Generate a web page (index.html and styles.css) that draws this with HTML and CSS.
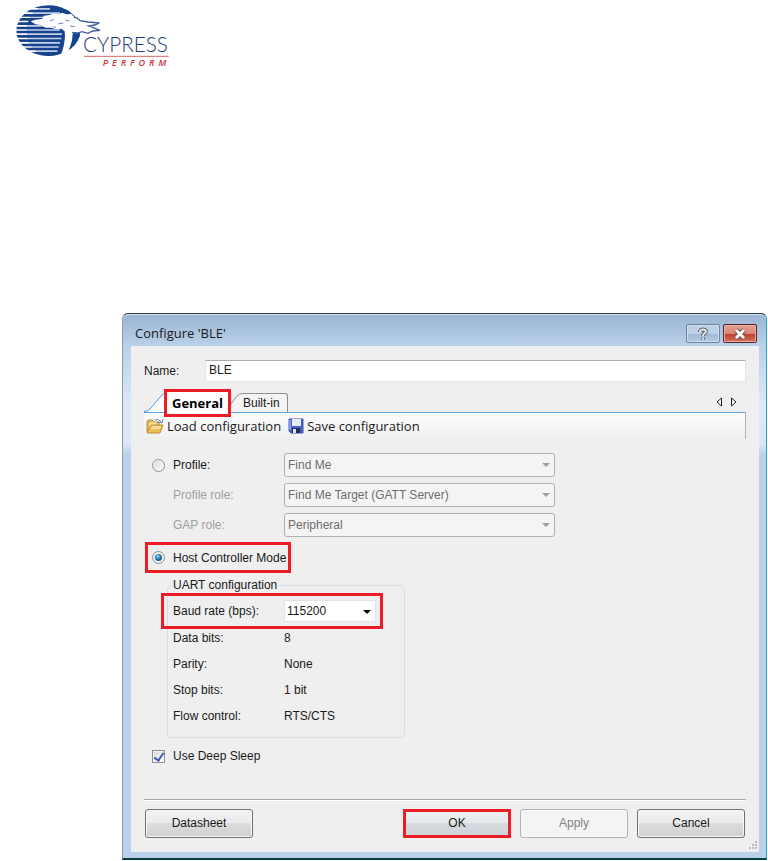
FILE: index.html
```html
<!DOCTYPE html>
<html lang="en">
<head>
<meta charset="UTF-8">
<meta name="viewport" content="width=device-width, initial-scale=1.0">
<title>Configure 'BLE'</title>
<link rel="stylesheet" href="styles.css">
</head>
<body>

<header class="page-header">
    <svg class="logo" viewBox="45 12 468 195" role="img" aria-label="Cypress Perform">
        <defs>
            <clipPath id="globe"><ellipse cx="145" cy="92" rx="96" ry="76"/></clipPath>
            <clipPath id="lens"><ellipse cx="150" cy="92" rx="70" ry="76"/></clipPath>
        </defs>
        <g clip-path="url(#globe)">
            <path d="M40 16h210v8H40zM40 29h210v8H40zM40 42h210v8H40zM40 54h210v8H40zM40 67h210v8H40zM40 80h210v8H40zM40 92h210v8H40zM40 105h210v8H40zM40 118h210v8H40zM40 131h210v8H40zM40 143h210v8H40zM40 156h210v12H40z" fill="#17438c"/>
            <path d="M150 16q44 20 50 60l-4 92 60-40V50L200 16z" fill="#17438c"/>
            <g clip-path="url(#lens)">
                <path d="M80 16h120v152H80z" fill="#17438c"/>
                <path d="M80 24h70v5H80zM80 37h100v5H80zM80 50h60v4H80zM80 75h60v5H80zM80 88h100v4H80zM80 100h106v5H80zM80 113h104v5H80zM80 126h100v5H80zM80 139h96v4H80zM80 151h92v5H80z" fill="#c3d0e7"/>
            </g>
        </g>
        <path d="M92 64l14-5 20-2 6-10 16-2 12-4 16 2 10-5 14 5 14-1 8 8 14 2 8 9 24 4 32 3-12 6-18 3 14 5 22 8-20 2-14 7-18-4-16 4-14-3-6 6-2 20-8 24-8 26-12 10-14-2 12-24 6-22 3-24-1-16-10-8-16 2-14-5-18 0-10-7-20-3z" fill="#fff"/>
        <path d="M222 52l10 2 8 8 24 4 34 3-14 6-18 3 14 5 20 8-22 2-14 7-18-5-16 5-14-3" fill="none" stroke="#3d5c95" stroke-width="4"/>
        <path d="M150 62l12-3M174 72l16-3M196 60l12 3M160 80l8 2M210 78l14 2" stroke="#6c87b5" stroke-width="3"/>
        <text class="logo-name" x="249" y="157">CYPRESS</text>
        <path d="M252 169h254" stroke="#d2686c" stroke-width="3"/>
        <text class="logo-tag" x="308" y="199">PERFORM</text>
    </svg>
</header>

<form class="dialog">
    <div class="titlebar">
        <h1>Configure 'BLE'</h1>
        <button type="button" class="win-button" aria-label="Help">
            <svg width="12" height="14" viewBox="0 0 12 14"><path d="M3 5V4Q4 2.500 6 2.500t3 1.500q0 1.500-1.500 2.500T6 9M6 10.500v2" fill="none" stroke="#5c6470" stroke-width="4"/><path d="M3 5V4Q4 2.500 6 2.500t3 1.500q0 1.500-1.500 2.500T6 9M6 10.500v2" fill="none" stroke="#e4e8ec" stroke-width="2"/></svg>
        </button>
        <button type="button" class="win-button close" aria-label="Close">
            <svg width="14" height="12" viewBox="0 0 14 12"><path d="M3 2l8 8M11 2l-8 8" stroke="#6b4a4a" stroke-width="5"/><path d="M3 2l8 8M11 2l-8 8" stroke="#fff" stroke-width="3"/></svg>
        </button>
    </div>

    <div class="client">
        <div class="name-row">
            <label for="name">Name:</label>
            <input type="text" id="name" value="BLE">
        </div>

        <div class="tabs">
            <svg class="slant" width="22" height="20" viewBox="0 0 22 20"><path d="M0 20L4 19 18 3Q20 1 22 0V20z" fill="#fff"/><path d="M0 19.500Q4 19.500 6 17L18 3Q20 1 22 1" fill="none" stroke="#4a9be0"/></svg>
            <button type="button" class="tab active marked">General</button>
            <svg class="slant" width="15" height="19" viewBox="0 0 15 19"><path d="M0 19V17L9 3Q11 0 15 0V19z" fill="#f4f4f4"/><path d="M0 15L9 3Q11 .500 15 .500" fill="none" stroke="#8e8f8f"/></svg>
            <button type="button" class="tab">Built-in</button>
            <button type="button" class="arrow first" aria-label="Previous tab"><svg width="6" height="10" viewBox="0 0 6 10"><path d="M5.500 1v8L1 5z" fill="#fff" stroke="#222"/></svg></button>
            <button type="button" class="arrow" aria-label="Next tab"><svg width="6" height="10" viewBox="0 0 6 10"><path d="M.500 1v8L5 5z" fill="#fff" stroke="#222"/></svg></button>
        </div>

        <div class="toolbar">
            <button type="button">
                <svg width="18" height="16" viewBox="0 0 18 16">
                    <path d="M1 14V4l1-2h4l2 2h5v3" fill="#e3b95c" stroke="#b98f3a"/>
                    <path d="M3 5l7-1 2 7H3z" fill="#f7e2a4"/>
                    <path d="M1 15L5 7h12l-3 8z" fill="#efbe58" stroke="#b98f3a"/>
                    <path d="M6 8h9l-1 3H5z" fill="#f9dc90"/>
                    <path d="M9 2q4-2 6 2M17 1l-1 4-4-1" fill="none" stroke="#5f86a8"/>
                </svg>
                Load configuration
            </button>
            <button type="button">
                <svg width="16" height="16" viewBox="0 0 16 16">
                    <path d="M1 1h14v14H3l-2-2z" fill="#4a5fc4" stroke="#4457b4"/>
                    <path d="M4 1h9v7H4z" fill="#e3ecfb"/>
                    <path d="M1 2h2v10H1z" fill="#7d98e6"/>
                    <path d="M4 10h8v5H4z" fill="#222c58"/>
                    <path d="M5 11h3v4H5z" fill="#dfe5f4"/>
                </svg>
                Save configuration
            </button>
        </div>

        <div class="settings">
            <div class="row">
                <label class="choice"><input type="radio" name="mode"> Profile:</label>
                <span class="combo">
                    <select aria-label="Profile" disabled><option>Find Me</option></select>
                </span>
            </div>
            <div class="row">
                <label class="off" for="profile-role">Profile role:</label>
                <span class="combo">
                    <select id="profile-role" disabled><option>Find Me Target (GATT Server)</option></select>
                </span>
            </div>
            <div class="row">
                <label class="off" for="gap-role">GAP role:</label>
                <span class="combo">
                    <select id="gap-role" disabled><option>Peripheral</option></select>
                </span>
            </div>

            <label class="choice host marked"><input type="radio" name="mode" checked> Host Controller Mode</label>

            <fieldset class="uart">
                <legend>UART configuration</legend>
                <div class="baud marked">
                    <label for="baud">Baud rate (bps):</label>
                    <span class="combo small">
                        <select id="baud"><option>115200</option></select>
                    </span>
                </div>
                <dl>
                    <dt>Data bits:</dt><dd>8</dd>
                    <dt>Parity:</dt><dd>None</dd>
                    <dt>Stop bits:</dt><dd>1 bit</dd>
                    <dt>Flow control:</dt><dd>RTS/CTS</dd>
                </dl>
            </fieldset>

            <label class="choice"><input type="checkbox" checked> Use Deep Sleep</label>
        </div>

        <div class="buttons">
            <button type="button" class="push">Datasheet</button>
            <button type="submit" class="push ok marked">OK</button>
            <button type="button" class="push" disabled>Apply</button>
            <button type="button" class="push">Cancel</button>
        </div>

        <svg class="grip" width="9" height="9" viewBox="0 0 9 9"><path d="M6 0h2v2H6zM3 3h2v2H3zM6 3h2v2H6zM0 6h2v2H0zM3 6h2v2H3zM6 6h2v2H6z" fill="#bdbdbd"/></svg>
    </div>
</form>

</body>
</html>
```
FILE: styles.css
```css
* {
    box-sizing: border-box;
}
body {
    margin: 0;
    background: #fff;
    color: #1a1a1a;
    font-family: "Liberation Sans", Arial, sans-serif;
    font-size: 12px;
    line-height: 16px;
}
button, input, select {
    font: inherit;
    color: inherit;
    margin: 0;
}
svg {
    display: block;
    flex: none;
}

/* logo */
.page-header {
    padding: 4px 15px 0;
    height: 313px;
}
.logo {
    width: 156px;
    height: 65px;
}
.logo-name {
    font-family: Lato, sans-serif;
    font-weight: 300;
    font-size: 62px;
    fill: #1d3a75;
}
.logo-tag {
    font-family: "Open Sans", sans-serif;
    font-style: italic;
    font-weight: 600;
    font-size: 27px;
    letter-spacing: 12px;
    fill: #c4343b;
}

/* window frame */
.dialog {
    margin: 0 1px 0 122px;
    padding: 0 7px 6px 8px;
    border: 1px solid #26323c;
    border-left-color: #8f9aa5;
    border-right: 1px solid #2ba5bd;
    border-bottom: 2px solid #0b3c46;
    border-radius: 6px 6px 0 0;
    background: linear-gradient(#9ab5d2, #b9d1ea 32px, #dce8f5 90px, #dbe7f4 130px, #b9d1ea 140px);
    box-shadow: inset 0 1px #d5e5f3;
}
.titlebar {
    display: flex;
    align-items: flex-start;
    height: 32px;
    padding: 10px 2px 0 4px;
    gap: 3px;
}
.titlebar h1 {
    flex: 1;
    margin: 0;
    font: 13px/18px "Open Sans", sans-serif;
}
.win-button {
    display: flex;
    align-items: center;
    justify-content: center;
    width: 34px;
    height: 19px;
    padding: 0;
    border: 1px solid #6f84a0;
    border-radius: 2px;
    background: linear-gradient(#bdd0e4 50%, #9fb8d3 50%, #b5cce4);
    box-shadow: inset 0 0 0 1px #cfdeed;
}
.win-button.close {
    border-color: #5b2229;
    background: linear-gradient(#e2a396, #d98677 50%, #bd3a27 50%, #d0755c);
    box-shadow: inset 0 0 0 1px #e6b0a5;
}
.client {
    position: relative;
    padding: 14px 13px;
    background: #efefef;
}
.marked {
    outline: 3px solid #ee1c25;
}

.name-row {
    display: flex;
    align-items: center;
}
.name-row label {
    width: 61px;
}
.name-row input {
    flex: 1;
    min-width: 0;
    height: 22px;
    padding: 0 3px 2px;
    border: 1px solid #e2e6ec;
    border-top-color: #abadb3;
    background: #fff;
}

/* tabs */
.tabs {
    display: flex;
    align-items: flex-end;
    height: 31px;
    border-bottom: 1px solid #5ba7e6;
}
.tab {
    height: 19px;
    padding: 0 7px 0 0;
    border: 1px solid #8e8f8f;
    border-width: 1px 1px 0 0;
    border-radius: 0 3px 0 0;
    background: #f4f4f4;
}
.tab.active {
    width: 61px;
    height: 22px;
    padding: 0;
    margin: 0 0 -2px 1px;
    border: 0;
    border-radius: 0;
    background: #fff;
    font: bold 13px/18px "Open Sans", sans-serif;
    color: #000;
    outline-offset: -1px;
    outline-offset: 0;
    z-index: 1;
}
.arrow {
    padding: 0;
    margin: 0 9px 5px 0;
    border: 0;
    background: none;
}
.arrow.first {
    margin-left: auto;
}
.toolbar {
    display: flex;
    align-items: center;
    gap: 7px;
    height: 26px;
    padding-left: 2px;
    border-right: 1px solid #b5b5b5;
    background: linear-gradient(#fcfcfc, #efefef);
}
.toolbar button {
    display: flex;
    align-items: center;
    gap: 3px;
    padding: 0;
    border: 0;
    background: none;
    font: 13px/18px "Open Sans", sans-serif;
}

/* settings */
.settings {
    padding: 14px 8px 35px;
    border-bottom: 1px solid #a8a8a8;
}
.row {
    display: flex;
    align-items: center;
    margin-bottom: 6px;
}
.row > label {
    width: 132px;
}
.off {
    padding-left: 21px;
    color: #a0a0a0;
}
.choice {
    display: flex;
    align-items: center;
    gap: 8px;
}
.choice input {
    appearance: none;
    display: grid;
    place-items: center;
    width: 13px;
    height: 13px;
    border: 1px solid #8e8f8f;
    background: linear-gradient(135deg, #d4d7da, #fff);
    box-shadow: inset 0 0 0 1px #f4f4f4;
}
.choice input[type=radio] {
    border-radius: 50%;
}
.choice input[type=radio]:checked::before {
    content: "";
    width: 7px;
    height: 7px;
    border-radius: 50%;
    background: radial-gradient(circle at 40% 35%, #8fdcf5, #1e6f9f 50%, #123a5e);
}
.choice input[type=checkbox]:checked::before {
    content: "";
    width: 4px;
    height: 8px;
    border: solid #4056a0;
    border-width: 0 2px 2px 0;
    transform: rotate(35deg);
}
.combo {
    position: relative;
    width: 271px;
}
.combo::after {
    content: "";
    position: absolute;
    right: 5px;
    top: 10px;
    border: 4px solid transparent;
    border-top-color: #a0a0a0;
    border-bottom: 0;
    pointer-events: none;
}
.combo select {
    appearance: none;
    display: block;
    width: 100%;
    height: 24px;
    padding: 0 20px 0 3px;
    border: 1px solid #adb2b5;
    border-radius: 3px;
    background: #f4f4f4;
    color: #6d6d6d;
    opacity: 1;
}
.combo.small {
    width: 92px;
}
.combo.small::after {
    border-top-color: #000;
}
.combo.small select {
    height: 22px;
    padding: 0 16px 0 2px;
    border-color: #dfe4ea;
    border-radius: 1px;
    background: #fff;
    color: #1a1a1a;
}
.host {
    width: 140px;
    height: 25px;
    margin: 8px 0 7px -4px;
    padding-left: 4px;
}
.uart {
    width: 238px;
    height: 161px;
    margin: 0 0 10px 15px;
    padding: 0 5px;
    border: 1px solid #d5dfe5;
    border-radius: 4px;
}
.uart legend {
    padding: 0 2px;
    margin-left: -2px;
}
.baud {
    display: flex;
    align-items: center;
    width: 216px;
    height: 30px;
    margin: 3px 0 0 -9px;
    padding-left: 9px;
}
.baud label {
    width: 111px;
}
.uart dl {
    display: grid;
    grid-template-columns: 111px auto;
    row-gap: 10px;
    margin: 4px 0 0;
}
.uart dd {
    margin: 0;
}

/* bottom buttons */
.buttons {
    display: flex;
    gap: 9px;
    padding: 8px 1px 0;
    border-top: 1px solid #fff;
}
.push {
    width: 108px;
    height: 29px;
    padding: 0 0 1px;
    border: 1px solid #707070;
    border-radius: 3px;
    background: linear-gradient(#f2f2f2, #ebebeb 50%, #dddddd 50%, #cfcfcf);
    box-shadow: inset 0 0 0 1px #f8f8f8;
}
.push.ok {
    margin-left: auto;
    border: 0;
    border-radius: 0;
    outline-offset: -3px;
    background: linear-gradient(#eef1f2, #e4e8ea 50%, #d4dadd 50%, #ccd2d5);
}
.push:disabled {
    border-color: #adb2b5;
    background: #f4f4f4;
    color: #838383;
}
.grip {
    position: absolute;
    right: 1px;
    bottom: 2px;
}
```
